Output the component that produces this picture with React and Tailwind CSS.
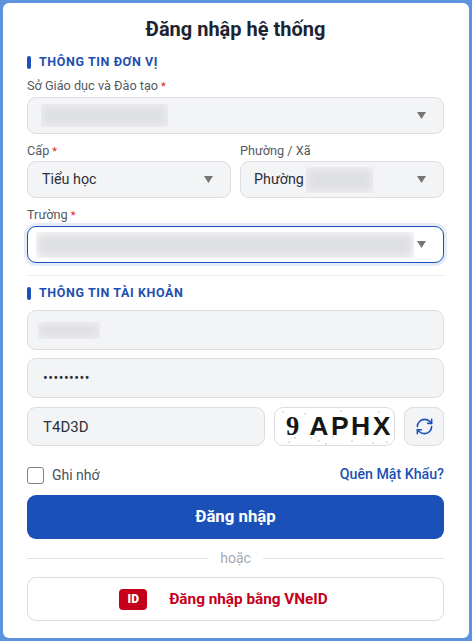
import { RefreshCw } from 'lucide-react';

function Caret() {
  return (
    <svg width="9" height="7" viewBox="0 0 9 7" className="shrink-0">
      <path d="M0 0h9L4.5 7z" fill="#757575" />
    </svg>
  );
}

function SectionTitle({ children }) {
  return (
    <div className="flex items-center gap-2 h-[14px]">
      <span className="w-1 h-[13px] rounded-sm bg-[#1a50b8]" />
      <span className="text-[12.5px] leading-[14px] font-bold tracking-[0.6px] text-[#1e4fae]">{children}</span>
    </div>
  );
}

function Label({ text, required }) {
  return (
    <div className="h-[14px] text-[12.7px] leading-[14px] text-[#55595f] whitespace-nowrap">
      {text}
      {required && <span className="ml-[3px] text-[11px] text-[#dc2626]">*</span>}
    </div>
  );
}

function Blur({ className }) {
  return (
    <div className={`overflow-hidden ${className}`}>
      <div className="w-full h-full bg-[#dfe0e3] blur-[5px]" />
    </div>
  );
}

function SelectBox({ children, className = '' }) {
  return (
    <div className={`h-[37px] flex items-center justify-between pl-[13px] pr-[17px] rounded-[9px] border border-[#dcdde0] bg-[#f3f4f6] text-[14.3px] text-[#2b3037] ${className}`}>
      {children}
      <Caret />
    </div>
  );
}

function InputBox({ children, className = '' }) {
  return (
    <div className={`h-10 flex items-center rounded-[9px] border border-[#dcdde0] bg-[#f3f4f6] ${className}`}>
      {children}
    </div>
  );
}

export default function App() {
  const dots = [[8, 4], [20, 30], [30, 6], [44, 33], [58, 29], [66, 3], [77, 33], [90, 28], [104, 4], [112, 34], [14, 34], [51, 36], [98, 35], [36, 30]];

  return (
    <div className="w-[472px] h-[641px] bg-[#5b93de] p-[3px] font-['Roboto',sans-serif]">
      <div className="h-full bg-white rounded-[6px] pl-6 pr-[25px] pt-[14px]">
        <h1 className="text-center text-[20px] leading-6 font-bold text-[#1c2431]">Đăng nhập hệ thống</h1>

        <div className="mt-[14px]">
          <SectionTitle>THÔNG TIN ĐƠN VỊ</SectionTitle>
        </div>

        <div className="mt-[10px]">
          <Label text="Sở Giáo dục và Đào tạo" required />
          <SelectBox className="mt-1">
            <Blur className="w-[127px] h-[23px]" />
          </SelectBox>
        </div>

        <div className="mt-[10px] grid grid-cols-2 gap-[9px]">
          <div>
            <Label text="Cấp" required />
            <SelectBox className="mt-[3px] pl-[14px]">Tiểu học</SelectBox>
          </div>
          <div>
            <Label text="Phường / Xã" />
            <SelectBox className="mt-[3px]">
              <div className="flex items-center">
                Phường
                <Blur className="ml-[2px] w-[67px] h-[26px]" />
              </div>
            </SelectBox>
          </div>
        </div>

        <div className="mt-[10px]">
          <Label text="Trường" required />
          <div className="mt-1 h-[37px] flex items-center justify-between pl-2 pr-[17px] rounded-[9px] border border-[#1a50b8] bg-white shadow-[0_0_0_3px_#e6ecf7]">
            <Blur className="w-[378px] h-[26px]" />
            <Caret />
          </div>
        </div>

        <div className="mt-3 border-t border-[#ebecee]" />

        <div className="mt-[10px]">
          <SectionTitle>THÔNG TIN TÀI KHOẢN</SectionTitle>
        </div>

        <InputBox className="mt-[10px] pl-[10px]">
          <Blur className="w-[62px] h-[17px]" />
        </InputBox>

        <InputBox className="mt-2 pl-[15px] text-[#2b3037]">
          <span className="text-[14px] tracking-[0.5px]">•••••••••</span>
        </InputBox>

        <div className="mt-[9px] flex gap-[9px]">
          <input
            readOnly
            value="T4D3D"
            className="w-[238px] h-[39px] pl-[15px] rounded-[9px] border border-[#dcdde0] bg-[#f3f4f6] text-[15px] text-[#2b3037] outline-none"
          />
          <div className="relative w-[121px] h-[39px] rounded-[9px] border border-[#dcdde0] bg-white overflow-hidden flex items-center pl-[11px] whitespace-nowrap text-[#161616] text-[26.5px] font-bold leading-none">
            <svg className="absolute inset-0" width="121" height="39">
              {dots.map(([x, y], i) => (
                <circle key={i} cx={x} cy={y} r="0.8" fill="#bdbdbd" />
              ))}
            </svg>
            <span className="relative font-['Liberation_Serif',serif] mr-[10px]">9</span>
            <span className="relative font-['Liberation_Sans',sans-serif] tracking-[2.5px]">APHX</span>
          </div>
          <div className="w-10 h-[39px] rounded-[9px] border border-[#dcdde0] bg-[#f3f4f6] flex items-center justify-center">
            <RefreshCw size={19} strokeWidth={2} className="text-[#1a50b8]" />
          </div>
        </div>

        <div className="mt-[20px] flex items-center justify-between h-[18px]">
          <label className="flex items-center gap-2 text-[14px] text-[#4b5057]">
            <span className="w-[17px] h-[17px] rounded-[3px] border-[1.5px] border-[#808080] bg-white" />
            Ghi nhớ
          </label>
          <a className="text-[14.2px] font-medium text-[#1a50b8]">Quên Mật Khẩu?</a>
        </div>

        <button className="mt-[11px] w-full h-11 rounded-[9px] bg-[#1a50b8] text-white text-[16.8px] font-bold">Đăng nhập</button>

        <div className="mt-[10px] h-[18px] flex items-center gap-3">
          <div className="flex-1 border-t border-[#e2e3e6]" />
          <span className="text-[14px] text-[#a5a9b2]">hoặc</span>
          <div className="flex-1 border-t border-[#e2e3e6]" />
        </div>

        <button className="mt-[10px] w-full h-11 pr-6 rounded-[9px] border border-[#dcdde0] bg-white flex items-center justify-center gap-[22px]">
          <span className="w-7 h-[21px] rounded-[4px] bg-[#c4001a] text-white text-[12px] font-black flex items-center justify-center">ID</span>
          <span className="text-[15.3px] font-bold text-[#c4001a]">Đăng nhập bằng VNeID</span>
        </button>
      </div>
    </div>
  );
}
